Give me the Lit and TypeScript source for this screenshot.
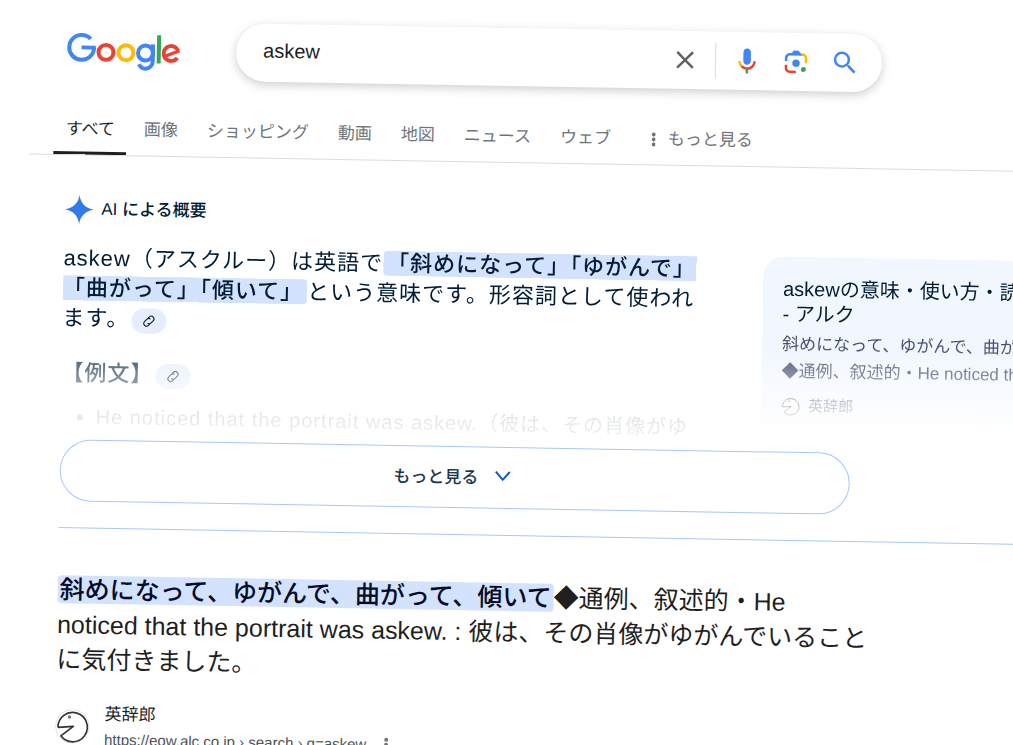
import { LitElement, html, svg, css } from "lit";
import { customElement } from "lit/decorators.js";
import { classMap } from "lit/directives/class-map.js";

interface Tab {
  label: string;
  active?: boolean;
}

const TABS: Tab[] = [
  { label: "すべて", active: true },
  { label: "画像" },
  { label: "ショッピング" },
  { label: "動画" },
  { label: "地図" },
  { label: "ニュース" },
  { label: "ウェブ" },
];

const wordmark = html`
  <svg class="wordmark" viewBox="0 0 340 120" fill="none" stroke-width="12" aria-hidden="true">
    <g stroke="#4285f4">
      <circle cx="43.5" cy="47.7" r="37.5" pathLength="360" stroke-dasharray="314 46" />
      <line x1="43" y1="48" x2="86" y2="48" stroke-width="11" />
    </g>
    <circle cx="117" cy="61.5" r="22.5" stroke="#ea4335" />
    <circle cx="177" cy="61.5" r="22.5" stroke="#fbbc05" />
    <g stroke="#4285f4">
      <circle cx="236" cy="61.5" r="22.5" />
      <line x1="258" y1="35" x2="258" y2="88" />
      <circle cx="236.5" cy="87" r="21.5" pathLength="360" stroke-dasharray="156 204" />
    </g>
    <rect x="270" y="7" width="12" height="85" fill="#34a853" />
    <g stroke="#ea4335">
      <circle cx="313" cy="61.5" r="22.5" pathLength="360" stroke-dasharray="304 56" transform="rotate(34 313 61.5)" />
      <line x1="293" y1="71" x2="338" y2="53" stroke-width="10" />
    </g>
  </svg>
`;

const closeIcon = html`<svg class="icon" viewBox="0 0 24 24" fill="#5f6368" aria-hidden="true">
  <path d="M19 6.41L17.59 5 12 10.59 6.41 5 5 6.41 10.59 12 5 17.59 6.41 19 12 13.41 17.59 19 19 17.59 13.41 12z" />
</svg>`;

const micIcon = html`<svg class="icon" viewBox="0 0 24 24" aria-hidden="true">
  <path fill="#4285f4" d="m12 15c1.66 0 3-1.31 3-2.97v-7.02c0-1.66-1.34-3.01-3-3.01s-3 1.34-3 3.01v7.02c0 1.66 1.34 2.97 3 2.97z" />
  <path fill="#34a853" d="m11 18.08h2v3.92h-2z" />
  <path fill="#fbbc04" d="m7.05 16.87c-1.27-1.33-2.05-2.83-2.05-4.87h2c0 1.45 0.56 2.42 1.47 3.38v0.32l-1.15 1.18z" />
  <path fill="#ea4335" d="m12 16.93a4.97 5.25 0 0 1 -3.54 -1.55l-1.41 1.49c1.26 1.34 3.02 2.13 4.95 2.13 3.87 0 6.99-2.92 6.99-7h-1.99c0 2.92-2.24 4.93-5 4.93z" />
</svg>`;

const lensIcon = html`<svg class="icon" viewBox="0 0 192 192" aria-hidden="true">
  <circle fill="#34a853" cx="144" cy="144" r="16" />
  <circle fill="#4285f4" cx="96" cy="104" r="24" />
  <path fill="#ea4335" d="M24 135.2c0 18.11 14.69 32.8 32.8 32.8H96v-16l-40.1-.1c-8.8 0-15.9-8.19-15.9-17.9v-18H24v19.2z" />
  <path fill="#fbbc04" d="M168 72.8c0-18.11-14.69-32.8-32.8-32.8H116l20 16c8.8 0 16 8.29 16 18v30h16V72.8z" />
  <path fill="#4285f4" d="M112 24H80L68 40H56.8C38.69 40 24 54.69 24 72.8V92h16V74c0-9.71 7.2-18 16-18h80L112 24z" />
</svg>`;

const searchIcon = html`<svg class="icon" viewBox="0 0 24 24" fill="#4285f4" aria-hidden="true">
  <path d="M15.5 14h-.79l-.28-.27A6.47 6.47 0 0 0 16 9.5 6.5 6.5 0 1 0 9.5 16c1.61 0 3.09-.59 4.23-1.57l.27.28v.79l5 4.99L20.49 19l-4.99-5zm-6 0C7.01 14 5 11.99 5 9.5S7.01 5 9.5 5 14 7.01 14 9.5 11.99 14 9.5 14z" />
</svg>`;

const sparkIcon = html`<svg class="icon" viewBox="0 0 30 30" aria-hidden="true">
  <path fill="#3179ed" d="M15 0.5C16 8.5 21.5 14 29.5 15 21.5 16 16 21.5 15 29.5 14 21.5 8.5 16 0.5 15 8.5 14 14 8.5 15 0.5z" />
</svg>`;

const linkIcon = html`<svg class="link-icon" viewBox="0 0 24 24" fill="none" stroke="currentColor" stroke-width="2" aria-hidden="true">
  <g transform="rotate(-45 12 12)">
    <path d="M15 7H18a5 5 0 0 1 0 10H12a5 5 0 0 1-4.8-4" />
    <path d="M9 17H6a5 5 0 0 1 0-10H12a5 5 0 0 1 4.8 4" />
  </g>
</svg>`;

const siteMark = svg`
  <circle cx="51" cy="51" r="50" fill="#fff" stroke="#d2d2d2" stroke-width="2" />
  <path d="M8 55L54 51L17 80A44 44 0 1 0 8 55" fill="none" stroke="#333" stroke-width="5" stroke-linejoin="round" />
  <circle cx="42" cy="23" r="5" fill="#777" />
`;

@customElement("app-root")
export class AppRoot extends LitElement {
  static styles = css`
    :host {
      display: block;
      height: 100vh;
      overflow: hidden;
      background: #fff;
      color: #1f1f1f;
      font-family: "Liberation Sans", "Noto Sans CJK JP", sans-serif;
    }
    * {
      box-sizing: border-box;
    }
    h1, h2, h3, p, ul {
      margin: 0;
      padding: 0;
      font-weight: 400;
    }
    a {
      color: inherit;
      text-decoration: none;
    }
    button {
      display: flex;
      align-items: center;
      justify-content: center;
      border: 0;
      padding: 0;
      background: none;
      font: inherit;
      color: inherit;
      cursor: pointer;
    }
    .page {
      margin: 0 -40px 0 32px;
      transform: rotate(1deg);
      transform-origin: -32px 0;
    }
    .top {
      display: flex;
      padding: 19px 0 0 36px;
    }
    .home {
      margin: 11px 56px 0 0;
    }
    .wordmark {
      display: block;
      width: 113px;
      height: 40px;
    }
    .search {
      display: flex;
      align-items: center;
      flex: 0 1 646px;
      height: 58px;
      padding: 0 22px 0 27px;
      border-radius: 29px;
      box-shadow: 0 3px 10px rgba(60, 64, 67, 0.26);
    }
    .query {
      flex: 1;
      min-width: 0;
      border: 0;
      padding: 0 0 4px;
      outline: 0;
      background: none;
      font: inherit;
      font-size: 20px;
      color: #1f1f1f;
    }
    .icon {
      display: block;
      width: 30px;
      height: 30px;
    }
    .tools {
      display: flex;
      gap: 19px;
      margin-left: 15px;
      padding: 3px 0 3px 16px;
      border-left: 1px solid #dadce0;
    }
    .tabs {
      display: flex;
      gap: 5px;
      margin-top: 26px;
      padding-left: 24px;
      border-bottom: 1px solid #dadce0;
      font-size: 17px;
      line-height: 50px;
      color: #70757a;
    }
    .tab {
      padding: 0 12px;
    }
    .tab.active {
      color: #1f1f1f;
      box-shadow: inset 0 -3px #1f1f1f;
    }
    .more {
      gap: 12px;
      padding-left: 24px;
    }
    .dots {
      width: 4px;
      height: 16px;
      fill: #70757a;
    }
    .results {
      padding: 39px 0 0 36px;
    }
    .ai-title {
      display: flex;
      align-items: center;
      gap: 7px;
      font-size: 17px;
      line-height: 30px;
      font-weight: 500;
      color: #001d35;
    }
    .overview {
      display: grid;
      grid-template-columns: 648px 1fr;
      gap: 52px;
      height: 196px;
      margin-top: 19px;
      overflow: hidden;
      color: #001d35;
      mask-image: linear-gradient(#000 88px, rgba(0, 0, 0, 0.1) 168px, rgba(0, 0, 0, 0.07) 188px, transparent 196px);
    }
    .answer {
      font-size: 22px;
      line-height: 30px;
      letter-spacing: 1px;
    }
    .mark {
      padding: 0 2px;
      border-radius: 4px;
      background: #d3e3fd;
      font-weight: 500;
      color: #001d35;
      line-height: 1;
    }
    .answer .mark {
      padding: 0 4px;
    }
    .cite {
      display: inline-flex;
      width: 35px;
      height: 25px;
      margin-left: 2px;
      border-radius: 13px;
      background: #e5edff;
      vertical-align: middle;
    }
    .link-icon {
      width: 13px;
      height: 13px;
    }
    .example-title {
      margin-top: 25px;
      font-size: 22px;
      font-weight: 500;
    }
    .examples {
      margin-top: 13px;
      padding-left: 35px;
      font-size: 20px;
      line-height: 30px;
    }
    .card {
      margin-top: 1px;
      padding: 20px;
      border-radius: 20px;
      background: #f1f6ff;
      white-space: nowrap;
    }
    .card-title {
      font-size: 20px;
      line-height: 25px;
    }
    .card-text {
      margin-top: 4px;
      font-size: 17px;
      line-height: 27px;
      color: #474f70;
    }
    .card-source {
      display: flex;
      align-items: center;
      gap: 8px;
      margin-top: 10px;
      font-size: 15px;
      line-height: 22px;
      color: #545d7e;
    }
    .small-mark {
      width: 19px;
      height: 19px;
    }
    .expand {
      gap: 16px;
      width: 790px;
      height: 62px;
      padding: 0 6px 4px 0;
      border: 1px solid #a8c7fa;
      border-radius: 31px;
      font-size: 17px;
      font-weight: 500;
      color: #1c364c;
    }
    .chevron {
      width: 16px;
      height: 16px;
      fill: none;
      stroke: #0b57d0;
      stroke-width: 2;
    }
    .featured {
      margin-top: 26px;
      padding-top: 44px;
      border-top: 1px solid #a8c7fa;
    }
    .snippet {
      max-width: 814px;
      font-size: 25px;
      line-height: 35px;
    }
    .snippet .mark {
      color: #040c28;
    }
    .site {
      display: flex;
      align-items: center;
      gap: 15px;
      margin-top: 24px;
    }
    .site-mark {
      width: 34px;
      height: 34px;
    }
    .site-name {
      font-size: 17px;
      line-height: 26px;
    }
    .site-line {
      display: flex;
      align-items: center;
      gap: 18px;
      font-size: 15px;
      line-height: 24px;
      color: #4d5156;
    }
  `;

  render() {
    return html`
      <div class="page">
        <header>
          <div class="top">
            <a class="home" href="#" aria-label="Google">${wordmark}</a>
            <form class="search" role="search" @submit=${(e: Event) => e.preventDefault()}>
              <input class="query" type="text" name="q" aria-label="検索" value="askew" autocomplete="off" />
              <button type="reset" aria-label="クリア">${closeIcon}</button>
              <div class="tools">
                <button type="button" aria-label="音声検索">${micIcon}</button>
                <button type="button" aria-label="画像で検索">${lensIcon}</button>
                <button type="submit" aria-label="検索">${searchIcon}</button>
              </div>
            </form>
          </div>
          <nav class="tabs">
            ${TABS.map(
              (t) => html`<a class=${classMap({ tab: true, active: !!t.active })} href="#">${t.label}</a>`
            )}
            <button class="more" type="button">
              <svg class="dots" viewBox="0 0 4 16" aria-hidden="true">
                <circle cx="2" cy="3" r="2" /><circle cx="2" cy="8" r="2" /><circle cx="2" cy="13" r="2" />
              </svg>
              もっと見る
            </button>
          </nav>
        </header>

        <main class="results">
          <h1 class="ai-title">${sparkIcon}AI による概要</h1>
          <section class="overview">
            <div class="answer">
              <p>askew（アスクルー）は英語で<span class="mark">「斜めになって」「ゆがんで」「曲がって」「傾いて」</span>という意味です。形容詞として使われます。<button class="cite" type="button" aria-label="関連リンク">${linkIcon}</button></p>
              <h2 class="example-title">【例文】<button class="cite" type="button" aria-label="関連リンク">${linkIcon}</button></h2>
              <ul class="examples">
                <li>He noticed that the portrait was askew.（彼は、その肖像がゆがんでいることに気付きました。）</li>
              </ul>
            </div>
            <a class="card" href="#">
              <h3 class="card-title">askewの意味・使い方・読み方<br />- アルク</h3>
              <p class="card-text">斜めになって、ゆがんで、曲がって<br />◆通例、叙述的・He noticed that</p>
              <div class="card-source">
                <svg class="small-mark" viewBox="0 0 102 102" aria-hidden="true">${siteMark}</svg>
                英辞郎
              </div>
            </a>
          </section>
          <button class="expand" type="button">
            もっと見る
            <svg class="chevron" viewBox="0 0 16 16" aria-hidden="true"><path d="M1 4l7 8 7-8" /></svg>
          </button>

          <section class="featured">
            <p class="snippet"><span class="mark">斜めになって、ゆがんで、曲がって、傾いて</span>◆通例、叙述的・He noticed that the portrait was askew. : 彼は、その肖像がゆがんでいることに気付きました。</p>
            <div class="site">
              <svg class="site-mark" viewBox="0 0 102 102" aria-hidden="true">${siteMark}</svg>
              <div>
                <div class="site-name">英辞郎</div>
                <div class="site-line">
                  <a href="#">https://eow.alc.co.jp › search › q=askew</a>
                  <svg class="dots" viewBox="0 0 4 16" aria-hidden="true">
                    <circle cx="2" cy="3" r="2" /><circle cx="2" cy="8" r="2" /><circle cx="2" cy="13" r="2" />
                  </svg>
                </div>
              </div>
            </div>
          </section>
        </main>
      </div>
    `;
  }
}
